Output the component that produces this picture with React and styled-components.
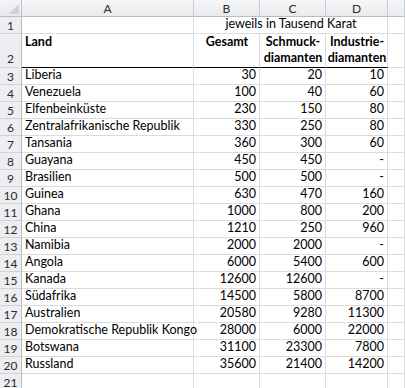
import React from "react";
import styled, { createGlobalStyle } from "styled-components";

const Global = createGlobalStyle`
  html, body { margin: 0; padding: 0; background: #ffffff; }
  body { font-family: Lato, "Liberation Sans", sans-serif; }
`;

const Sheet = styled.div`
  display: grid;
  grid-template-columns: 22px 172px 66px 66px 62px 1fr;
  grid-template-rows: 17px 17px 34px repeat(19, 17px);
  width: 405px;
  height: 388px;
  overflow: hidden;
  font-size: 12.5px;
  color: #000;
  background: #fff;
`;

const Corner = styled.div`
  position: relative;
  background: linear-gradient(#f4f5f6, #e6e8eb);
  border-right: 1px solid #b9bdc3;
  border-bottom: 1px solid #b9bdc3;
  box-sizing: border-box;
`;

const CornerTri = styled.div`
  position: absolute;
  right: 2px;
  bottom: 2px;
  width: 0;
  height: 0;
  border-left: 10px solid transparent;
  border-bottom: 10px solid #cdd0d4;
`;

const ColHead = styled.div`
  display: flex;
  align-items: center;
  justify-content: center;
  background: linear-gradient(#f6f7f8, #e8eaed);
  border-right: 1px solid #c9ccd1;
  border-bottom: 1px solid #b9bdc3;
  box-sizing: border-box;
  color: #2b2b2b;
  font-size: 12px;
`;

const RowHead = styled.div`
  display: flex;
  align-items: ${(p) => (p.$tall ? "flex-end" : "center")};
  justify-content: center;
  background: #eceef1;
  border-right: 1px solid #b9bdc3;
  border-bottom: 1px solid #cfd2d6;
  box-sizing: border-box;
  color: #2b2b2b;
  font-size: 12px;
  padding-bottom: ${(p) => (p.$tall ? "1px" : "0")};
`;

const Cell = styled.div`
  display: flex;
  align-items: ${(p) => (p.$top ? "flex-start" : "flex-end")};
  justify-content: ${(p) =>
    p.$align === "right" ? "flex-end" : p.$align === "center" ? "center" : "flex-start"};
  text-align: ${(p) => p.$align || "left"};
  grid-column: ${(p) => (p.$span ? `span ${p.$span}` : "auto")};
  border-right: 1px solid ${(p) => (p.$noRight ? "transparent" : "#dadcdd")};
  border-bottom: 1px solid ${(p) => (p.$thick ? "#000" : "#dadcdd")};
  box-sizing: border-box;
  padding: ${(p) => (p.$align === "right" ? "0 3px 1px 2px" : "0 2px 1px 3px")};
  font-weight: ${(p) => (p.$bold ? 700 : 400)};
  line-height: 16px;
  white-space: nowrap;
  overflow: visible;
`;

const rows = [
  ["Liberia", 30, 20, 10],
  ["Venezuela", 100, 40, 60],
  ["Elfenbeinküste", 230, 150, 80],
  ["Zentralafrikanische Republik", 330, 250, 80],
  ["Tansania", 360, 300, 60],
  ["Guayana", 450, 450, "-"],
  ["Brasilien", 500, 500, "-"],
  ["Guinea", 630, 470, 160],
  ["Ghana", 1000, 800, 200],
  ["China", 1210, 250, 960],
  ["Namibia", 2000, 2000, "-"],
  ["Angola", 6000, 5400, 600],
  ["Kanada", 12600, 12600, "-"],
  ["Südafrika", 14500, 5800, 8700],
  ["Australien", 20580, 9280, 11300],
  ["Demokratische Republik Kongo", 28000, 6000, 22000],
  ["Botswana", 31100, 23300, 7800],
  ["Russland", 35600, 21400, 14200],
];

export default function App() {
  return (
    <>
      <Global />
      <Sheet>
        <Corner>
          <CornerTri />
        </Corner>
        <ColHead>A</ColHead>
        <ColHead>B</ColHead>
        <ColHead>C</ColHead>
        <ColHead>D</ColHead>
        <ColHead />

        <RowHead>1</RowHead>
        <Cell />
        <Cell $span={3} $align="center">jeweils in Tausend Karat</Cell>
        <Cell />

        <RowHead $tall>2</RowHead>
        <Cell $top $bold $thick>Land</Cell>
        <Cell $top $bold $thick $align="center">Gesamt</Cell>
        <Cell $top $bold $thick $align="center">
          Schmuck-
          <br />
          diamanten
        </Cell>
        <Cell $top $bold $thick $align="center">
          Industrie-
          <br />
          diamanten
        </Cell>
        <Cell />

        {rows.map((r, i) => (
          <React.Fragment key={r[0]}>
            <RowHead>{i + 3}</RowHead>
            <Cell>{r[0]}</Cell>
            <Cell $align="right">{r[1]}</Cell>
            <Cell $align="right">{r[2]}</Cell>
            <Cell $align="right">{r[3]}</Cell>
            <Cell />
          </React.Fragment>
        ))}

        <RowHead>21</RowHead>
        <Cell />
        <Cell />
        <Cell />
        <Cell />
        <Cell />
      </Sheet>
    </>
  );
}
